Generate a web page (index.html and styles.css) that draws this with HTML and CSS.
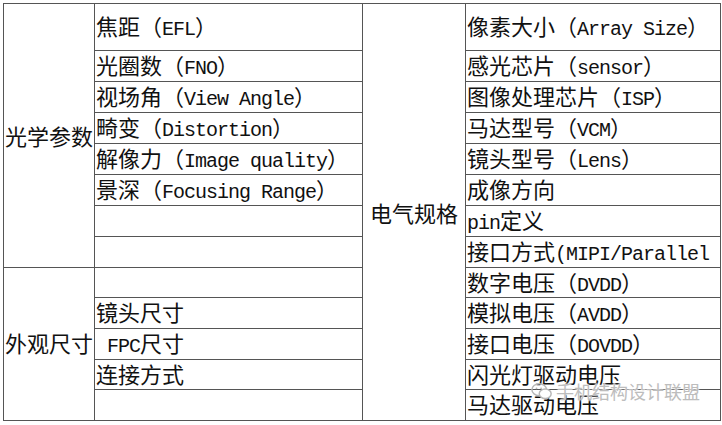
FILE: index.html
```html
<!DOCTYPE html>
<html lang="zh-CN">
<head>
<meta charset="utf-8">
<title>摄像头模组参数</title>
<link rel="stylesheet" href="styles.css">
</head>
<body>
<div class="page">
  <div class="sheet">
    <div class="col col-group">
      <div class="cell group group-optic">光学参数</div>
      <div class="cell group group-size">外观尺寸</div>
    </div>
    <div class="col">
      <div class="cell tall">焦距（<span class="en">EFL</span>）</div>
      <div class="cell">光圈数（<span class="en">FNO</span>）</div>
      <div class="cell">视场角（<span class="en">View Angle</span>）</div>
      <div class="cell">畸变（<span class="en">Distortion</span>）</div>
      <div class="cell">解像力（<span class="en">Image quality</span>）</div>
      <div class="cell">景深（<span class="en">Focusing Range</span>）</div>
      <div class="cell"></div>
      <div class="cell"></div>
      <div class="cell short"></div>
      <div class="cell">镜头尺寸</div>
      <div class="cell"><span class="en"> FPC</span>尺寸</div>
      <div class="cell short">连接方式</div>
      <div class="cell"></div>
    </div>
    <div class="col col-group">
      <div class="cell group group-elec">电气规格</div>
    </div>
    <div class="col">
      <div class="cell tall">像素大小（<span class="en">Array Size</span>）</div>
      <div class="cell">感光芯片（<span class="en">sensor</span>）</div>
      <div class="cell">图像处理芯片（<span class="en">ISP</span>）</div>
      <div class="cell">马达型号（<span class="en">VCM</span>）</div>
      <div class="cell">镜头型号（<span class="en">Lens</span>）</div>
      <div class="cell">成像方向</div>
      <div class="cell"><span class="en">pin</span>定义</div>
      <div class="cell">接口方式<span class="en">(MIPI/Parallel</span></div>
      <div class="cell short">数字电压（<span class="en">DVDD</span>）</div>
      <div class="cell">模拟电压（<span class="en">AVDD</span>）</div>
      <div class="cell">接口电压（<span class="en">DOVDD</span>）</div>
      <div class="cell short">闪光灯驱动电压</div>
      <div class="cell">马达驱动电压</div>
    </div>
  </div>
  <div class="watermark">
    <svg class="wm-icon" viewBox="0 0 24 20" width="22" height="19" aria-hidden="true">
      <ellipse cx="9" cy="8" rx="8" ry="6.5" fill="none" stroke="#b8b8b8" stroke-width="1.6"/>
      <ellipse cx="15.5" cy="12.5" rx="6.5" ry="5.2" fill="#fff" stroke="#b8b8b8" stroke-width="1.6"/>
      <circle cx="6" cy="6.5" r="1" fill="#b8b8b8"/>
      <circle cx="11" cy="6.5" r="1" fill="#b8b8b8"/>
    </svg>
    <span class="wm-text">手机结构设计联盟</span>
  </div>
</div>
</body>
</html>
```

FILE: styles.css
```css
html, body {
  margin: 0;
  padding: 0;
  background: #fff;
}

.page {
  position: relative;
  width: 722px;
  height: 425px;
  padding: 3px 0 0 3px;
  box-sizing: border-box;
  font-family: "Noto Sans CJK SC", sans-serif;
  font-size: 22px;
  color: #111;
}

.sheet {
  display: grid;
  grid-template-columns: 90px 267px 102px 254px;
  gap: 1px;
  padding: 1px;
  width: max-content;
  background: #555;
}

.col {
  display: flex;
  flex-direction: column;
  gap: 1px;
}

.cell {
  background: #fff;
  height: 30px;
  line-height: 27px;
  padding-left: 1px;
  white-space: nowrap;
}

.cell.tall {
  height: 46px;
  line-height: 43px;
}

.cell.short {
  height: 29px;
  line-height: 26px;
}

.group {
  display: flex;
  align-items: center;
  justify-content: center;
  padding-left: 0;
  line-height: 1.2;
}

.group-optic {
  height: 263px;
}

.group-size {
  height: auto;
  flex: 1;
  padding-bottom: 4px;
  box-sizing: border-box;
}

.group-elec {
  height: auto;
  flex: 1;
}

.en {
  font-family: "Liberation Mono", monospace;
  font-size: 20px;
  letter-spacing: -1px;
  white-space: pre;
}

.watermark {
  position: absolute;
  left: 531px;
  top: 381px;
  display: flex;
  align-items: center;
  gap: 3px;
}

.wm-text {
  font-size: 18px;
  line-height: 20px;
  color: #bdbdbd;
  text-shadow: 0 0 2px #fff, 0 0 2px #fff;
}
```
